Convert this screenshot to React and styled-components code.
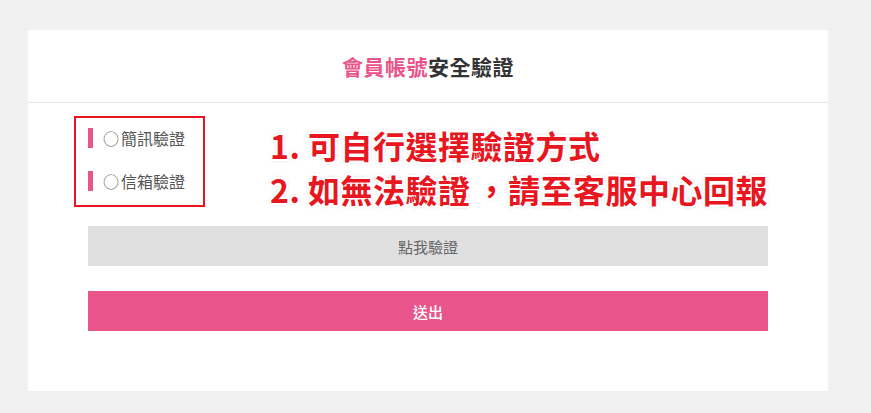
import React from 'react'
import styled, { createGlobalStyle } from 'styled-components'

const Pink = '#e9558a';
const Red = '#e8171f';

const Global = createGlobalStyle`
html, body {
  margin:0;
  padding:0;
  background:#f1f1f1;
  font-family:"Noto Sans CJK TC", "Noto Sans", sans-serif;
}
`
const Pagina = styled.div`
padding:30px 0 22px 28px;
`
const Tarjeta = styled.div`
position:relative;
width:800px;
background:#fff;
`
const Cabecera = styled.div`
height:72px;
display:flex;
align-items:center;
justify-content:center;
border-bottom:1px solid #e8e8e8;
font-size:21px;
font-weight:700;
color:#333;
letter-spacing:0.5px;
`
const Rosa = styled.span`
color:${Pink};
`
const Cuerpo = styled.div`
padding:13px 60px 60px;
display:flex;
flex-direction:column;
`
const Marco = styled.div`
width:115px;
margin-left:-14px;
border:2px solid ${Red};
padding:10px 0 14px 12px;
box-sizing:content-box;
display:flex;
flex-direction:column;
gap:23px;
`
const Opcion = styled.label`
height:20px;
display:flex;
align-items:center;
gap:10px;
font-size:16px;
color:#555;
&::before{
content:'';
display:block;
width:5px;
height:20px;
background:${Pink};
}
`
const Circulo = styled.span`
margin-right:2px;
color:#666;
`
const Boton = styled.div`
height:40px;
display:flex;
align-items:center;
justify-content:center;
font-size:15px;
margin-top:${p => p.$arriba}px;
background:${p => p.$rosa ? Pink : '#e0e0e0'};
color:${p => p.$rosa ? '#fff' : '#666'};
font-weight:${p => p.$rosa ? 500 : 400};
`
const Nota = styled.div`
position:absolute;
left:242px;
top:93px;
font-size:32px;
font-weight:700;
line-height:44px;
color:${Red};
letter-spacing:0.5px;
text-shadow:
  2px 0 0 #fff, -2px 0 0 #fff, 0 2px 0 #fff, 0 -2px 0 #fff,
  2px 2px 0 #fff, -2px -2px 0 #fff, 2px -2px 0 #fff, -2px 2px 0 #fff,
  0 0 4px rgba(0,0,0,0.4);
`
const Coma = styled.span`
padding-left:5px;
`

export default function App() {
  return (
    <Pagina lang="zh-TW">
      <Global />
      <Tarjeta>
        <Cabecera><Rosa>會員帳號</Rosa>安全驗證</Cabecera>
        <Cuerpo>
          <Marco>
            <Opcion><span><Circulo>○</Circulo>簡訊驗證</span></Opcion>
            <Opcion><span><Circulo>○</Circulo>信箱驗證</span></Opcion>
          </Marco>
          <Boton $arriba={19}>點我驗證</Boton>
          <Boton $arriba={25} $rosa>送出</Boton>
        </Cuerpo>
        <Nota>
          1. 可自行選擇驗證方式<br />
          2. 如無法驗證<Coma>，</Coma>請至客服中心回報
        </Nota>
      </Tarjeta>
    </Pagina>
  )
}
